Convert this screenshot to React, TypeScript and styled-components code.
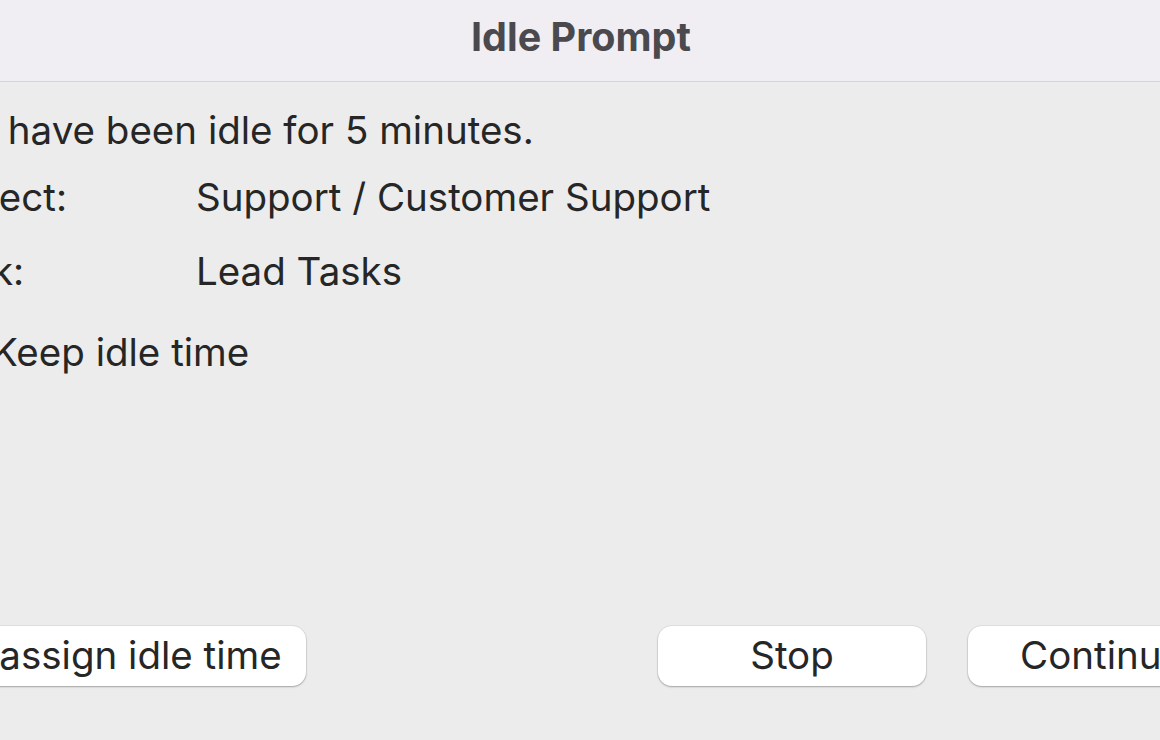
import React from "react";
import styled, { createGlobalStyle } from "styled-components";

const Global = createGlobalStyle`
  html, body { margin: 0; padding: 0; overflow: hidden; background: #ececec; }
  body { font-family: "Inter", "Liberation Sans", sans-serif; -webkit-font-smoothing: antialiased; }
`;

const Viewport = styled.div`
  width: 1160px;
  height: 740px;
  overflow: hidden;
`;

const Window = styled.div`
  width: 1422px;
  height: 740px;
  margin-left: -130px;
  display: flex;
  flex-direction: column;
  background: #ececec;
`;

const TitleBar = styled.div`
  height: 81px;
  flex: none;
  background: #f0eef3;
  border-bottom: 1px solid #d5d5d7;
  display: flex;
  align-items: center;
  justify-content: center;
`;

const Title = styled.h1`
  margin: 0;
  font-size: 39.5px;
  font-weight: 700;
  color: #4a494e;
  letter-spacing: 0;
  padding-bottom: 8px;
`;

const Body = styled.div`
  flex: 1;
  display: flex;
  flex-direction: column;
  padding: 24px 56px 54px 58px;
`;

const Text = styled.div`
  font-size: 38.5px;
  line-height: 48px;
  color: #262626;
  white-space: nowrap;
`;

const Message = styled(Text)`
  margin-bottom: 19px;
`;

const InfoGrid = styled.div`
  display: grid;
  grid-template-columns: 268px 1fr;
  row-gap: 26px;
`;

const CheckRow = styled.label`
  margin-top: 33px;
  display: flex;
  align-items: center;
  gap: 26px;
`;

const Box = styled.span`
  width: 38px;
  height: 38px;
  border-radius: 9px;
  background: #fff;
  box-shadow: 0 1px 2px rgba(0, 0, 0, 0.25), 0 0 0 1px rgba(0, 0, 0, 0.06);
  flex: none;
`;

const Footer = styled.div`
  margin-top: auto;
  display: flex;
  align-items: center;
`;

const Spacer = styled.div`
  flex: 1;
`;

const Button = styled.button<{ $wide?: boolean }>`
  height: 60px;
  width: ${(p) => (p.$wide ? "378px" : "268px")};
  border: none;
  border-radius: 14px;
  background: #ffffff;
  box-shadow: 0 1px 2px rgba(0, 0, 0, 0.28), 0 0 0 1px rgba(0, 0, 0, 0.05);
  font-family: inherit;
  font-size: 38.5px;
  color: #262626;
  padding: 0 0 3px 0;
  cursor: default;
  & + & {
    margin-left: 42px;
  }
`;

export default function App() {
  return (
    <Viewport>
      <Global />
      <Window>
        <TitleBar>
          <Title>Idle Prompt</Title>
        </TitleBar>
        <Body>
          <Message>You have been idle for 5 minutes.</Message>
          <InfoGrid>
            <Text>Project:</Text>
            <Text>Support / Customer Support</Text>
            <Text>Task:</Text>
            <Text>Lead Tasks</Text>
          </InfoGrid>
          <CheckRow>
            <Box />
            <Text>Keep idle time</Text>
          </CheckRow>
          <Footer>
            <Button $wide>Reassign idle time</Button>
            <Spacer />
            <Button>Stop</Button>
            <Button>Continue</Button>
          </Footer>
        </Body>
      </Window>
    </Viewport>
  );
}
